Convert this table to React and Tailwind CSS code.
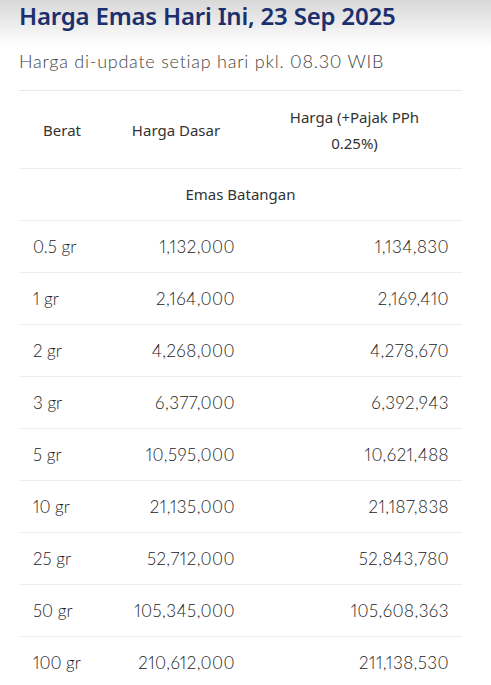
import React from "react";

const rows = [
    ["0.5 gr", "1,132,000", "1,134,830"],
    ["1 gr", "2,164,000", "2,169,410"],
    ["2 gr", "4,268,000", "4,278,670"],
    ["3 gr", "6,377,000", "6,392,943"],
    ["5 gr", "10,595,000", "10,621,488"],
    ["10 gr", "21,135,000", "21,187,838"],
    ["25 gr", "52,712,000", "52,843,780"],
    ["50 gr", "105,345,000", "105,608,363"],
    ["100 gr", "210,612,000", "211,138,530"],
];

const App = () => {
    return (
        <div className="min-h-screen bg-[linear-gradient(to_bottom,#d8d8d8_0px,#ffffff_46px)] px-[19px] pr-[29px]">
            <h1 className="pt-[1px] text-[24px] leading-[30px] font-semibold text-[#1b2f6e] font-['Noto_Sans',sans-serif] tracking-[-0.2px]">
                Harga Emas Hari Ini, 23 Sep 2025
            </h1>
            <p className="mt-[17px] text-[18px] leading-[26px] font-light tracking-[0.75px] proportional-nums text-[#444] font-['Lato',sans-serif]">
                Harga di-update setiap hari pkl. 08.30 WIB
            </p>

            <div className="mt-[16px] border-t border-[#e8e8e8]">
                {/* HEADER */}
                <div className="grid grid-cols-[86px_142px_1fr] h-[78px] items-center border-b border-[#eeeeee] text-[15px] leading-[26px] text-[#333] font-['Noto_Sans',sans-serif] text-center">
                    <div>Berat</div>
                    <div>Harga Dasar</div>
                    <div className="px-8">Harga (+Pajak PPh 0.25%)</div>
                </div>
                <div className="h-[52px] flex items-center justify-center border-b border-[#eeeeee] text-[15px] text-[#333] font-['Noto_Sans',sans-serif]">
                    Emas Batangan
                </div>

                {/* ROWS */}
                {rows.map(([berat, dasar, pajak]) => (
                    <div key={berat} className="grid grid-cols-[86px_142px_1fr] h-[52px] items-center border-b border-[#eeeeee] text-[17px] font-light proportional-nums text-[#222] font-['Lato',sans-serif]">
                        <div className="pl-[14px]">{berat}</div>
                        <div className="pr-[12px] text-right tracking-[0.45px]">{dasar}</div>
                        <div className="pr-[13px] text-right tracking-[0.45px]">{pajak}</div>
                    </div>
                ))}
            </div>
        </div>
    );
};

export default App;
